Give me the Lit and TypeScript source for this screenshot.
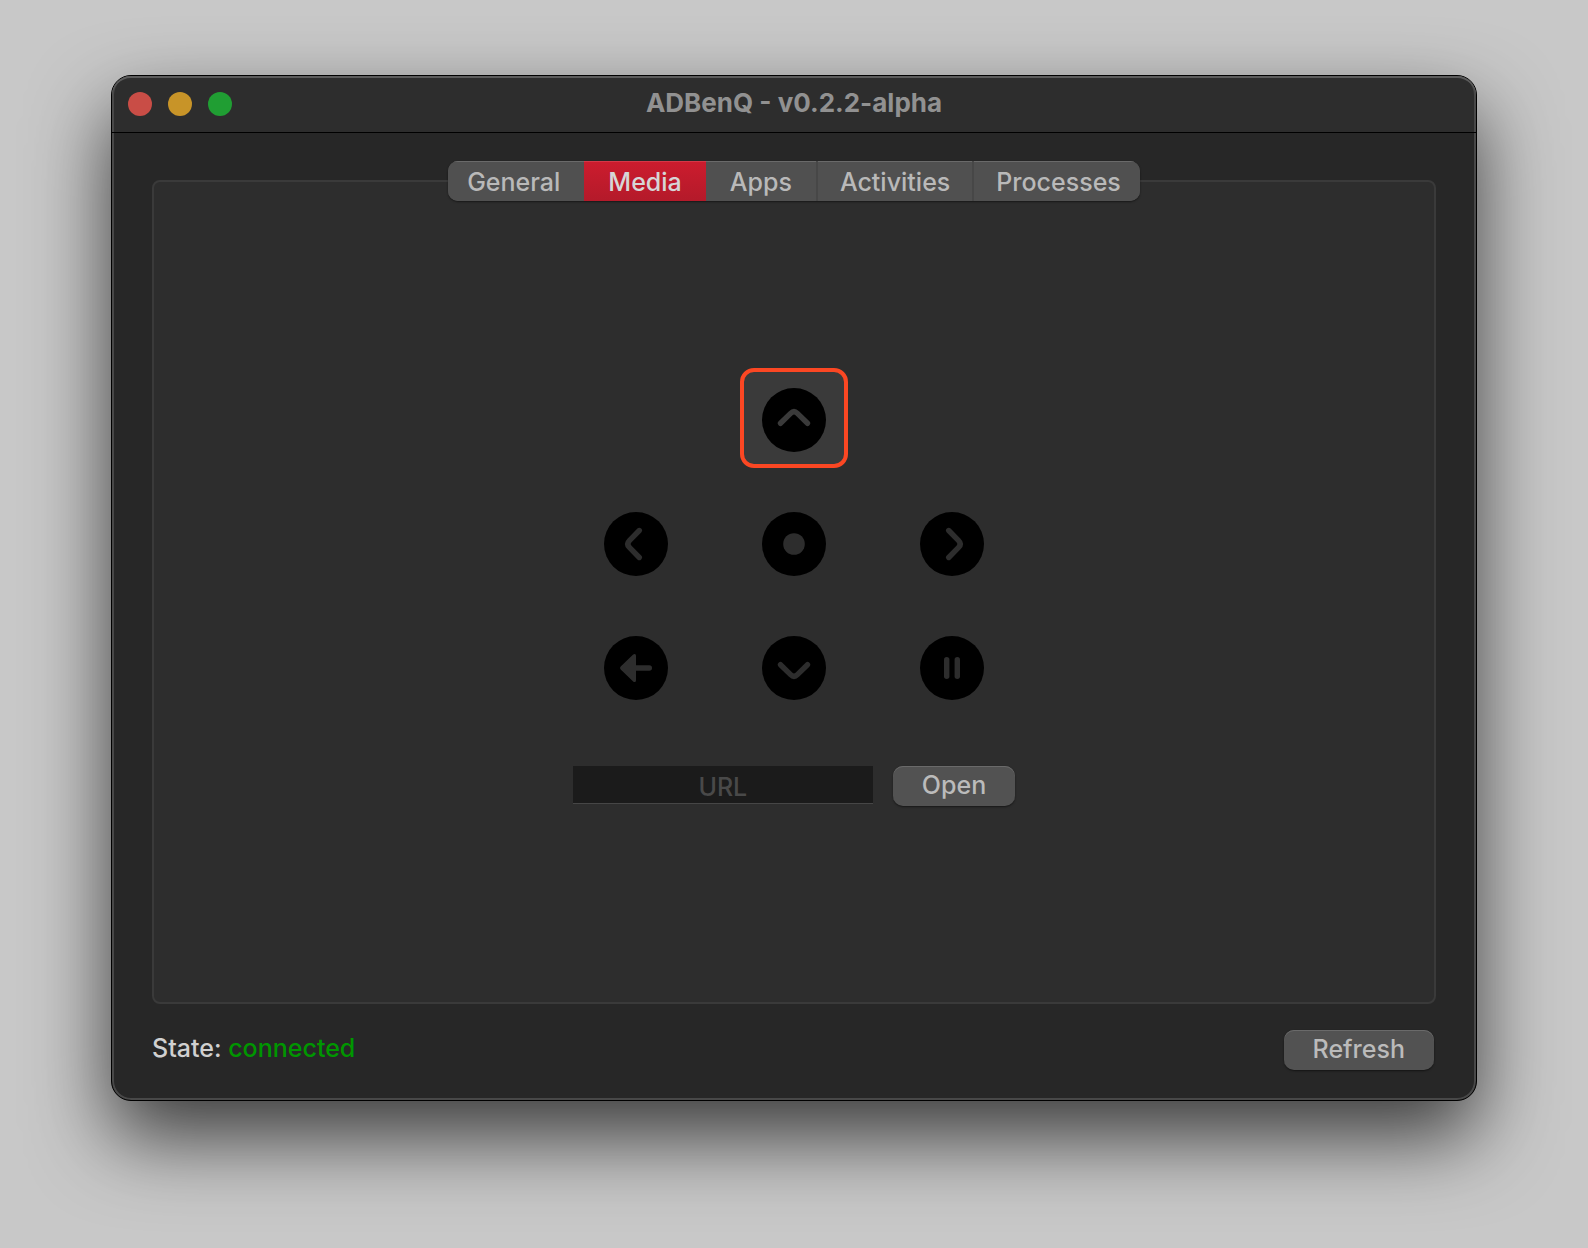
import { LitElement, html, css, svg } from "lit";
import { customElement, state } from "lit/decorators.js";
import { classMap } from "lit/directives/class-map.js";

const CHEVRON = "M18.5 35.3 L28.6 25.4 Q32 22 35.4 25.4 L45.5 35.3";

const glyphs = {
  up: svg`<path class="stroke" d=${CHEVRON} />`,
  right: svg`<path class="stroke" transform="rotate(90 32 32)" d=${CHEVRON} />`,
  down: svg`<path class="stroke" transform="rotate(180 32 32)" d=${CHEVRON} />`,
  left: svg`<path class="stroke" transform="rotate(270 32 32)" d=${CHEVRON} />`,
  select: svg`<circle class="fill" cx="32" cy="32" r="10.8" />`,
  back: svg`
    <path class="fill" d="M16.7 30.4 L28.9 18.8 Q30.4 17.4 31.4 18.2 Q32 18.6 32 20 V29.3 H45.3 A2.7 2.7 0 0 1 45.3 34.7 H32 V44 Q32 45.4 31.4 45.8 Q30.4 46.6 28.9 45.2 L16.7 33.6 Q15.2 32 16.7 30.4 Z" />`,
  pause: svg`
    <rect class="fill" x="24" y="21" width="5.4" height="22" rx="2.7" />
    <rect class="fill" x="34.6" y="21" width="5.4" height="22" rx="2.7" />`,
};

type Key = keyof typeof glyphs;

const ROWS: (Key | null)[] = [
  null, "up", null,
  "left", "select", "right",
  "back", "down", "pause",
];

const TABS = ["General", "Media", "Apps", "Activities", "Processes"];

@customElement("remote-pad")
export class RemotePad extends LitElement {
  static styles = css`
    :host {
      display: block;
    }
    .pad {
      display: grid;
      grid-template-columns: repeat(3, 108px);
      grid-auto-rows: 100px;
      gap: 24px 50px;
    }
    .key {
      display: flex;
      align-items: center;
      justify-content: center;
      padding: 4px 0 0;
      border: 4px solid transparent;
      border-radius: 14px;
      background: none;
      outline: none;
      --glyph: #2d2d2d;
    }
    .key.focused {
      border-color: #fb4723;
      background: #3a3a3a;
      --glyph: #3a3a3a;
    }
    .icon {
      width: 64px;
      height: 64px;
    }
    .disc {
      fill: #000;
    }
    .fill {
      fill: var(--glyph);
    }
    .stroke {
      fill: none;
      stroke: var(--glyph);
      stroke-width: 5.4;
      stroke-linecap: round;
    }
  `;

  @state() private focusedKey: Key = "up";

  render() {
    return html`<div class="pad">
      ${ROWS.map((key) =>
        key
          ? html`<button
              class=${classMap({ key: true, focused: key === this.focusedKey })}
              aria-label=${key}
              @focus=${() => (this.focusedKey = key)}
            >
              <svg class="icon" viewBox="0 0 64 64" aria-hidden="true">
                <circle class="disc" cx="32" cy="32" r="32" />
                ${glyphs[key]}
              </svg>
            </button>`
          : html`<span></span>`
      )}
    </div>`;
  }
}

@customElement("app-root")
export class AppRoot extends LitElement {
  static styles = css`
    :host {
      box-sizing: border-box;
      display: flex;
      min-height: 100vh;
      padding: 75px 111px 147px;
      background: #c8c8c8;
      font-family: Inter, "Liberation Sans", sans-serif;
      font-size: 25px;
      font-weight: 450;
      line-height: 32px;
      color: #d0d0d0;
    }
    .window {
      flex: 1;
      display: flex;
      flex-direction: column;
      border: 1px solid #000;
      border-radius: 20px;
      background: #272727;
      box-shadow:
        inset 0 0 0 2px #484848,
        0 36px 80px rgba(0, 0, 0, 0.7);
    }
    .titlebar {
      display: grid;
      grid-template-columns: 1fr auto 1fr;
      align-items: center;
      height: 56px;
      padding: 0 16px;
      border-bottom: 1px solid #000;
      border-radius: 19px 19px 0 0;
      background: #2d2d2d;
      box-shadow:
        inset 0 2px 0 #5c5c5c,
        inset 2px 0 0 #484848,
        inset -2px 0 0 #484848;
    }
    .lights {
      display: flex;
      gap: 16px;
    }
    .light {
      width: 24px;
      height: 24px;
      padding: 0;
      border: 0;
      border-radius: 50%;
    }
    .close {
      background: #c94d46;
    }
    .minimize {
      background: #c89428;
    }
    .zoom {
      background: #209e33;
    }
    .title {
      margin: 0;
      padding-bottom: 2px;
      font-size: 26px;
      font-weight: 700;
      line-height: 32px;
      color: #919191;
    }
    .content {
      flex: 1;
      display: flex;
      flex-direction: column;
      padding: 28px 40px 30px;
    }
    .tabs {
      z-index: 1;
      align-self: center;
      display: flex;
      margin-bottom: -21px;
      border-radius: 10px;
      overflow: hidden;
      background: #505050;
      box-shadow: 0 1px 2px rgba(0, 0, 0, 0.5);
    }
    .tab {
      height: 40px;
      padding: 2px 24px 0;
      border: 0;
      background: #505050;
      box-shadow: inset 0 1px 0 #6a6a6a;
      font: inherit;
      color: #b9b9b9;
    }
    .tab.divided {
      padding: 2px 22px 0;
      border-left: 2px solid #474747;
    }
    .tab:first-child {
      padding-left: 19px;
    }
    .tab:last-child {
      padding-right: 19px;
    }
    .tab.selected {
      background: linear-gradient(#cc1c2e, #b41a2a);
      box-shadow: inset 0 1px 0 #d43848;
      color: #d6d6d6;
    }
    .panel {
      flex: 1;
      display: flex;
      flex-direction: column;
      align-items: center;
      justify-content: center;
      gap: 50px;
      padding: 20px 20px 30px;
      border: 2px solid #3a3a3a;
      border-radius: 8px;
      background: #2d2d2d;
    }
    .open-url {
      display: flex;
      gap: 20px;
    }
    .url {
      box-sizing: border-box;
      width: 300px;
      height: 38px;
      padding: 4px 4px 0;
      border: 0;
      border-bottom: 1px solid #464646;
      border-radius: 0;
      background: #1b1b1b;
      outline: none;
      font: inherit;
      text-align: center;
      color: #d0d0d0;
    }
    .url::placeholder {
      color: #494949;
      opacity: 1;
    }
    .button {
      height: 40px;
      padding: 0 29px 2px;
      border: 0;
      border-radius: 10px;
      background: #525252;
      box-shadow:
        inset 0 1px 0 #6a6a6a,
        0 1px 2px rgba(0, 0, 0, 0.5);
      font: inherit;
      color: #bbb;
    }
    .footer {
      display: flex;
      align-items: center;
      justify-content: space-between;
      margin-top: 26px;
      padding-right: 2px;
    }
    .status {
      margin: 0;
      padding-bottom: 4px;
    }
    .connected {
      color: #009600;
    }
  `;

  @state() private tab = 1;

  private renderTab(label: string, index: number) {
    const selected = index === this.tab;
    const divided = index > 0 && !selected && index - 1 !== this.tab;
    return html`<button
      role="tab"
      aria-selected=${selected ? "true" : "false"}
      class=${classMap({ tab: true, selected, divided })}
      @click=${() => (this.tab = index)}
    >${label}</button>`;
  }

  render() {
    return html`
      <main class="window">
        <header class="titlebar">
          <div class="lights">
            <button class="light close" aria-label="Close"></button>
            <button class="light minimize" aria-label="Minimize"></button>
            <button class="light zoom" aria-label="Zoom"></button>
          </div>
          <h1 class="title">ADBenQ - v0.2.2-alpha</h1>
        </header>
        <div class="content">
          <div class="tabs" role="tablist">
            ${TABS.map((label, index) => this.renderTab(label, index))}
          </div>
          <section class="panel" role="tabpanel" aria-label=${TABS[this.tab]}>
            <remote-pad></remote-pad>
            <form class="open-url" @submit=${(e: Event) => e.preventDefault()}>
              <input class="url" type="text" placeholder="URL" aria-label="URL" />
              <button class="button" type="submit">Open</button>
            </form>
          </section>
          <footer class="footer">
            <p class="status">State: <span class="connected">connected</span></p>
            <button class="button" type="button">Refresh</button>
          </footer>
        </div>
      </main>
    `;
  }
}
